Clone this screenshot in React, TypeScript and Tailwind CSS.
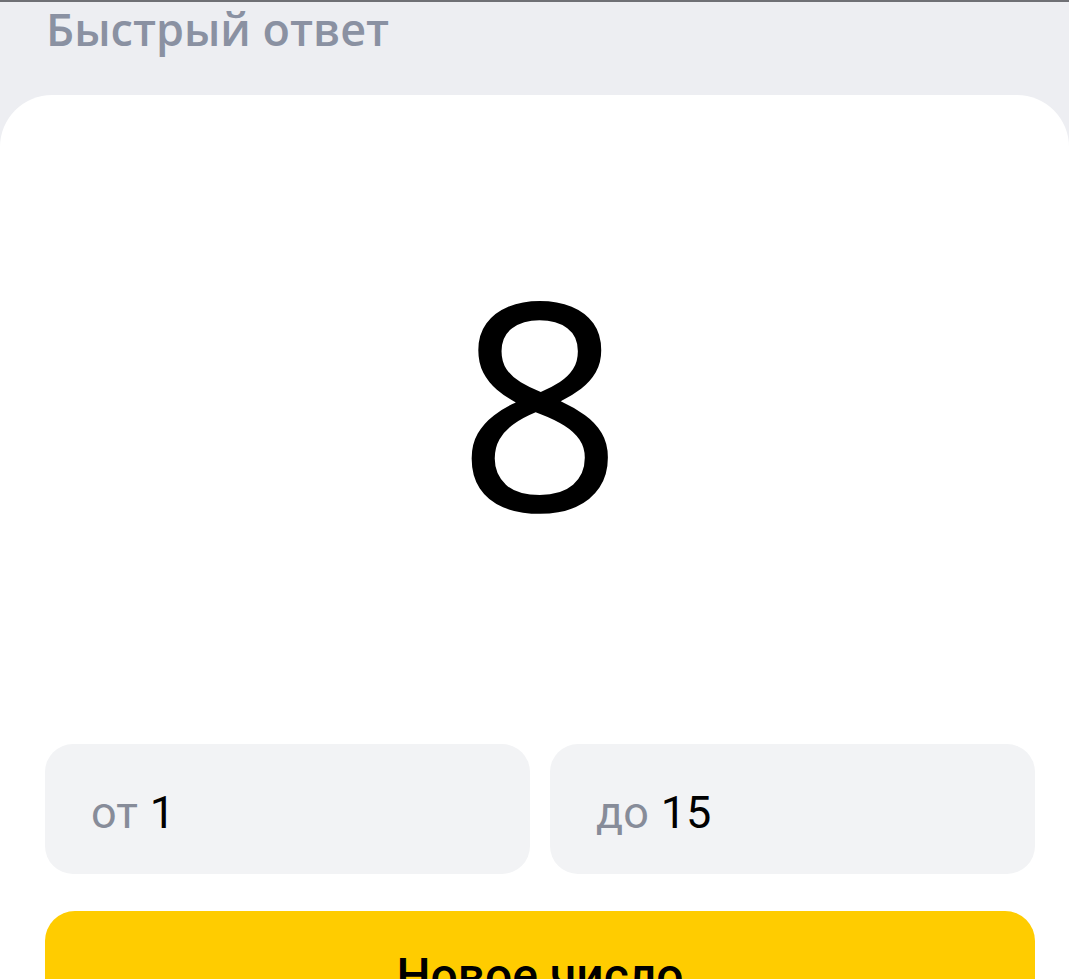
import React, { useState } from 'react';

export default function App() {
    const [value, setValue] = useState(8);
    const [from] = useState(1);
    const [to] = useState(15);

    const roll = () => setValue(Math.floor(Math.random() * (to - from + 1)) + from);

    return (
        <div className="h-screen bg-[#edeef2] border-t-2 border-[#6f7075] overflow-hidden" style={{ fontFamily: 'Roboto, "Noto Sans", sans-serif' }}>
            <div className="h-[94px] px-[46px]">
                <h1 className="text-[45px] leading-[56px] font-semibold text-[#8a91a2] -mt-[1px]" style={{ fontFamily: '"Open Sans", Roboto, sans-serif' }}>Быстрый ответ</h1>
            </div>
            <div className="bg-white rounded-t-[52px] pl-[45px] pr-[34px]">
                <div className="h-[649px] flex items-center justify-center pb-[42px]">
                    <span className="text-[290px] leading-none font-medium text-black" style={{ fontFamily: '"Open Sans", sans-serif' }}>{value}</span>
                </div>
                <div className="grid grid-cols-2 gap-[20px]">
                    <div className="h-[130px] rounded-[28px] bg-[#f2f3f5] flex items-center px-[46px] pt-[8px] gap-[12px] text-[45px]">
                        <span className="text-[#878c99]">от</span>
                        <span className="text-black">{from}</span>
                    </div>
                    <div className="h-[130px] rounded-[28px] bg-[#f2f3f5] flex items-center px-[46px] pt-[8px] gap-[12px] text-[45px]">
                        <span className="text-[#878c99]">до</span>
                        <span className="text-black">{to}</span>
                    </div>
                </div>
                <button onClick={roll} className="mt-[37px] w-full h-[130px] rounded-[30px] bg-[#fc0] text-black text-[48px] font-medium">Новое число</button>
            </div>
        </div>
    );
}
